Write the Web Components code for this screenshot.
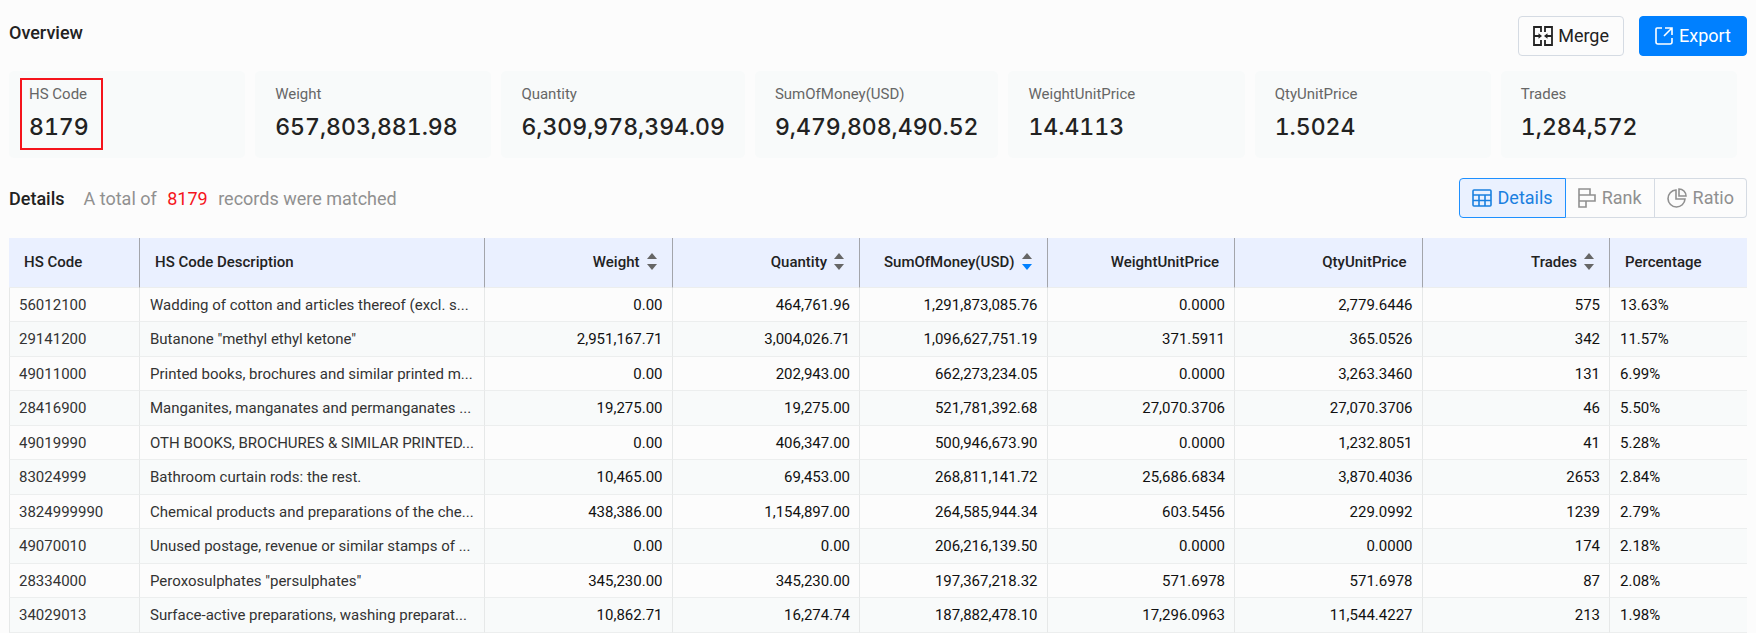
<!DOCTYPE html>
<html lang="en">
<head>
<meta charset="utf-8">
<meta name="viewport" content="width=device-width, initial-scale=1">
<title>Trade Overview</title>
<style>
    body {
        margin: 0;
        background: #fcfcfc;
        color: #222;
        font-family: Roboto, "Liberation Sans", sans-serif;
    }
</style>
</head>
<body>
<trade-report></trade-report>

<script>
const ICONS = {
    merge: `<svg width="20" height="20" viewBox="0 0 20 20" fill="none" stroke="currentColor" stroke-width="1.8">
        <path d="M8 6V1H1v18h7v-5M12 6V1h7v18h-7v-5M1 10h5M19 10h-5"/>
        <path d="M5.500 7.300 9 10l-3.500 2.700zM14.500 7.300 11 10l3.500 2.700z" fill="currentColor" stroke="none"/>
    </svg>`,
    export: `<svg width="18" height="18" viewBox="0 0 18 18" fill="none" stroke="currentColor" stroke-width="1.600">
        <path d="M7 1H2a1 1 0 0 0-1 1v13a2 2 0 0 0 2 2h12a2 2 0 0 0 2-2v-4M10 1h7v7M17 1 9 9"/>
    </svg>`,
    details: `<svg width="20" height="20" viewBox="0 0 20 20" fill="none" stroke="currentColor" stroke-width="1.600">
        <rect x="1" y="2" width="18" height="16" rx="1"/>
        <path d="M1 7h18M1 12.500h18M7 7v11M13 7v11"/>
    </svg>`,
    rank: `<svg width="18" height="20" viewBox="0 0 18 20" fill="none" stroke="currentColor" stroke-width="1.600">
        <path d="M1 1h11v6H1zM1 7h16v6H1zM1 13h7v6H1z"/>
    </svg>`,
    ratio: `<svg width="20" height="20" viewBox="0 0 20 20" fill="none" stroke="currentColor" stroke-width="1.600">
        <path d="M9 2A8.500 8.500 0 1 0 18 11H9z"/>
        <path d="M12 1v7h7A7 7 0 0 0 12 1z"/>
    </svg>`
};

class TradeButton extends HTMLElement {
    connectedCallback() {
        this.attachShadow({ mode: 'open' });
        this.shadowRoot.innerHTML = `
            <style>
                :host {
                    display: block;
                }
                button {
                    display: flex;
                    align-items: center;
                    gap: 5px;
                    height: 40px;
                    padding: 0 14px;
                    border: 1px solid #d5dbe3;
                    border-radius: 4px;
                    background: #fcfcfc;
                    color: #222;
                    font: 400 18px/24px Roboto, sans-serif;
                    cursor: pointer;
                }
                svg {
                    display: block;
                }
                :host([primary]) button {
                    gap: 6px;
                    padding: 0 15px;
                    border-color: #0080ff;
                    background: #0080ff;
                    color: #fff;
                }
            </style>
            <button type="button">${ICONS[this.getAttribute('icon')]}<slot></slot></button>
        `;
    }
}
customElements.define('trade-button', TradeButton);

class ViewSwitch extends HTMLElement {
    connectedCallback() {
        const views = ['Details', 'Rank', 'Ratio'];
        this.attachShadow({ mode: 'open' });
        this.shadowRoot.innerHTML = `
            <style>
                :host {
                    display: flex;
                }
                button {
                    display: flex;
                    align-items: center;
                    gap: 6px;
                    height: 40px;
                    padding: 0 12px;
                    border: 1px solid #d5dbe3;
                    border-left-width: 0;
                    background: #fcfcfc;
                    color: #909090;
                    font: 400 18px/24px Roboto, sans-serif;
                    cursor: pointer;
                }
                button:first-of-type {
                    border-left-width: 1px;
                    border-radius: 4px 0 0 4px;
                }
                button:last-of-type {
                    border-radius: 0 4px 4px 0;
                }
                button[aria-pressed="true"] {
                    border-color: #1e90ff;
                    background: #eaf1ff;
                    color: #1a80e0;
                }
            </style>
            ${views.map((view, i) => `<button type="button" aria-pressed="${i === 0}">${ICONS[view.toLowerCase()]}${view}</button>`).join('')}
        `;
        const buttons = this.shadowRoot.querySelectorAll('button');
        buttons.forEach(button => button.addEventListener('click', () => {
            buttons.forEach(other => other.setAttribute('aria-pressed', other === button));
        }));
    }
}
customElements.define('view-switch', ViewSwitch);

class StatCard extends HTMLElement {
    connectedCallback() {
        this.attachShadow({ mode: 'open' });
        this.shadowRoot.innerHTML = `
            <style>
                :host {
                    display: block;
                    flex: 1 1 0;
                    padding: 11px 20px 15px;
                    border-radius: 5px;
                    background: #f8fafa;
                }
                .stat {
                    position: relative;
                    width: max-content;
                }
                .label {
                    color: #666;
                    font-size: 15px;
                    line-height: 24px;
                }
                .value {
                    padding-top: 5px;
                    color: #222;
                    font: 500 23px/32px Inter, sans-serif;
                    font-variant-numeric: tabular-nums;
                }
                :host([marked]) .stat::after {
                    content: "";
                    position: absolute;
                    inset: -4px -14px -7px -9px;
                    border: 2px solid #f5141c;
                }
            </style>
            <div class="stat">
                <div class="label">${this.getAttribute('label')}</div>
                <div class="value"><slot></slot></div>
            </div>
        `;
    }
}
customElements.define('stat-card', StatCard);

class TradeTable extends HTMLElement {
    connectedCallback() {
        const columns = [
            { name: 'HS Code', cls: 'text' },
            { name: 'HS Code Description', cls: 'text desc' },
            { name: 'Weight', sort: 'none' },
            { name: 'Quantity', sort: 'none' },
            { name: 'SumOfMoney(USD)', sort: 'descending' },
            { name: 'WeightUnitPrice' },
            { name: 'QtyUnitPrice' },
            { name: 'Trades', sort: 'none' },
            { name: 'Percentage', cls: 'percent' }
        ];
        const rows = [
            ['56012100', 'Wadding of cotton and articles thereof (excl. s...', '0.00', '464,761.96', '1,291,873,085.76', '0.0000', '2,779.6446', '575', '13.63%'],
            ['29141200', 'Butanone "methyl ethyl ketone"', '2,951,167.71', '3,004,026.71', '1,096,627,751.19', '371.5911', '365.0526', '342', '11.57%'],
            ['49011000', 'Printed books, brochures and similar printed m...', '0.00', '202,943.00', '662,273,234.05', '0.0000', '3,263.3460', '131', '6.99%'],
            ['28416900', 'Manganites, manganates and permanganates ...', '19,275.00', '19,275.00', '521,781,392.68', '27,070.3706', '27,070.3706', '46', '5.50%'],
            ['49019990', 'OTH BOOKS, BROCHURES &amp; SIMILAR PRINTED...', '0.00', '406,347.00', '500,946,673.90', '0.0000', '1,232.8051', '41', '5.28%'],
            ['83024999', 'Bathroom curtain rods: the rest.', '10,465.00', '69,453.00', '268,811,141.72', '25,686.6834', '3,870.4036', '2653', '2.84%'],
            ['3824999990', 'Chemical products and preparations of the che...', '438,386.00', '1,154,897.00', '264,585,944.34', '603.5456', '229.0992', '1239', '2.79%'],
            ['49070010', 'Unused postage, revenue or similar stamps of ...', '0.00', '0.00', '206,216,139.50', '0.0000', '0.0000', '174', '2.18%'],
            ['28334000', 'Peroxosulphates "persulphates"', '345,230.00', '345,230.00', '197,367,218.32', '571.6978', '571.6978', '87', '2.08%'],
            ['34029013', 'Surface-active preparations, washing preparat...', '10,862.71', '16,274.74', '187,882,478.10', '17,296.0963', '11,544.4227', '213', '1.98%']
        ];
        const arrows = `<svg width="10" height="17" viewBox="0 0 10 17" fill="currentColor"><path d="M5 0l5 6H0z"/><path class="down" d="M5 17l5-6H0z"/></svg>`;

        this.attachShadow({ mode: 'open' });
        this.shadowRoot.innerHTML = `
            <style>
                :host {
                    display: block;
                }
                table {
                    width: 100%;
                    table-layout: fixed;
                    border-collapse: separate;
                    border-spacing: 0;
                    font-size: 15px;
                    line-height: 20px;
                }
                .col-code { width: 131px; }
                .col-desc { width: 345px; }
                .col-percent { width: 137px; }
                th, td {
                    box-sizing: border-box;
                    border-right: 1px solid #e6e8e8;
                    border-bottom: 1px solid #eceeee;
                    text-align: right;
                    white-space: nowrap;
                    overflow: hidden;
                    text-overflow: ellipsis;
                }
                th {
                    height: 50px;
                    padding: 0 15px 2px;
                    border-right-color: #a3a5ab;
                    background: #eaf0ff;
                    color: #222;
                    font-weight: 500;
                }
                td {
                    height: 34px;
                    padding: 0 9px;
                    color: #111;
                }
                tbody tr:nth-child(even) td {
                    height: 35px;
                    background: #f8fafa;
                }
                td:first-child {
                    border-left: 1px solid #e6e8e8;
                }
                th:last-child, td:last-child {
                    border-right: 0;
                }
                .text, .percent {
                    text-align: left;
                }
                td.text {
                    color: #333;
                }
                td.desc, td.percent {
                    padding-left: 10px;
                }
                .sort {
                    display: inline-flex;
                    align-items: center;
                    gap: 7px;
                    padding: 0;
                    border: 0;
                    background: none;
                    color: inherit;
                    font: inherit;
                    cursor: pointer;
                }
                .sort svg {
                    color: #666;
                }
                [aria-sort="descending"] .down {
                    fill: #0080ff;
                }
            </style>
            <table>
                <colgroup>
                    <col class="col-code"><col class="col-desc">
                    <col><col><col><col><col><col>
                    <col class="col-percent">
                </colgroup>
                <thead>
                    <tr>${columns.map(c => c.sort
                        ? `<th scope="col" aria-sort="${c.sort}"><button type="button" class="sort">${c.name}${arrows}</button></th>`
                        : `<th scope="col" class="${c.cls || ''}">${c.name}</th>`).join('')}</tr>
                </thead>
                <tbody>
                    ${rows.map(row => `<tr>${row.map((cell, i) => `<td class="${columns[i].cls || ''}">${cell}</td>`).join('')}</tr>`).join('')}
                </tbody>
            </table>
        `;
    }
}
customElements.define('trade-table', TradeTable);

class TradeReport extends HTMLElement {
    connectedCallback() {
        this.attachShadow({ mode: 'open' });
        this.shadowRoot.innerHTML = `
            <style>
                :host {
                    display: block;
                    padding: 16px 9px 0;
                }
                header, .details {
                    display: flex;
                    justify-content: space-between;
                }
                h2 {
                    margin: 0;
                    font-size: 18px;
                    font-weight: 500;
                    line-height: 24px;
                }
                header h2 {
                    padding-top: 5px;
                }
                .actions {
                    display: flex;
                    gap: 15px;
                }
                .stats {
                    display: flex;
                    gap: 10px;
                    margin-top: 15px;
                    padding-right: 10px;
                }
                .details {
                    align-items: center;
                    margin: 20px 0;
                }
                .title {
                    display: flex;
                    gap: 19px;
                    padding-top: 2px;
                }
                p {
                    margin: 0;
                    color: #909090;
                    font-size: 18px;
                    line-height: 24px;
                }
                p span {
                    margin: 0 6px;
                    color: #f5141c;
                }
            </style>
            <header>
                <h2>Overview</h2>
                <div class="actions">
                    <trade-button icon="merge">Merge</trade-button>
                    <trade-button icon="export" primary>Export</trade-button>
                </div>
            </header>
            <section class="stats">
                <stat-card label="HS Code" marked>8179</stat-card>
                <stat-card label="Weight">657,803,881.98</stat-card>
                <stat-card label="Quantity">6,309,978,394.09</stat-card>
                <stat-card label="SumOfMoney(USD)">9,479,808,490.52</stat-card>
                <stat-card label="WeightUnitPrice">14.4113</stat-card>
                <stat-card label="QtyUnitPrice">1.5024</stat-card>
                <stat-card label="Trades">1,284,572</stat-card>
            </section>
            <section class="details">
                <div class="title">
                    <h2>Details</h2>
                    <p>A total of <span>8179</span> records were matched</p>
                </div>
                <view-switch></view-switch>
            </section>
            <trade-table></trade-table>
        `;
    }
}
customElements.define('trade-report', TradeReport);
</script>
</body>
</html>
